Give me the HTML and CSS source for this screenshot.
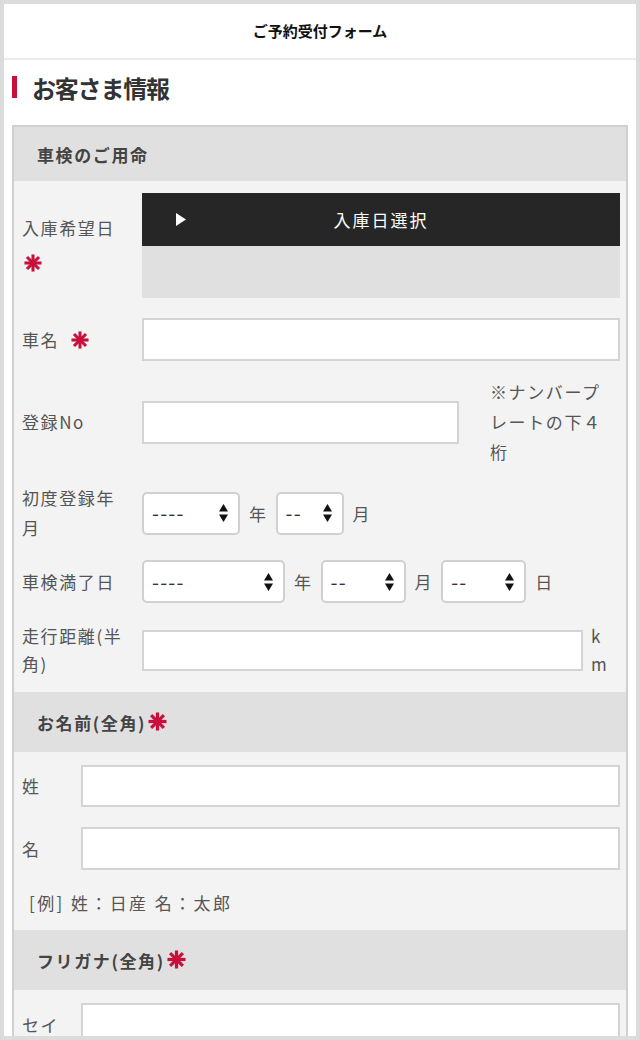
FILE: index.html
```html
<!DOCTYPE html>
<html lang="ja">
<head>
<meta charset="utf-8">
<title>ご予約受付フォーム</title>
<link rel="stylesheet" href="styles.css">
</head>
<body>
<div class="frame">
  <header class="topbar"><h1>ご予約受付フォーム</h1></header>
  <h2 class="page-title">お客さま情報</h2>

  <div class="form-box">
    <div class="group-head">車検のご用命</div>
    <div class="group-body">
      <div class="row row-date">
        <div class="label label-top">
          <div>入庫希望日</div>
          <svg class="req req-below" viewBox="0 0 20 20"><g stroke="currentColor" stroke-width="3.4"><line x1="10" y1="0.5" x2="10" y2="19.5"/><line x1="0.5" y1="10" x2="19.5" y2="10"/><line x1="3.3" y1="3.3" x2="16.7" y2="16.7"/><line x1="16.7" y1="3.3" x2="3.3" y2="16.7"/></g></svg>
        </div>
        <div class="date-picker">
          <div class="date-btn">
            <svg class="play" viewBox="0 0 10 13"><polygon points="0,0 10,6.5 0,13" fill="#fff"/></svg>
            <span class="date-btn-text">入庫日選択</span>
            <span></span>
          </div>
          <div class="date-area"></div>
        </div>
      </div>

      <div class="row row-car">
        <div class="label">車名<svg class="req req-inline" viewBox="0 0 20 20"><g stroke="currentColor" stroke-width="3.4"><line x1="10" y1="0.5" x2="10" y2="19.5"/><line x1="0.5" y1="10" x2="19.5" y2="10"/><line x1="3.3" y1="3.3" x2="16.7" y2="16.7"/><line x1="16.7" y1="3.3" x2="3.3" y2="16.7"/></g></svg></div>
        <input class="text-input" type="text">
      </div>

      <div class="row row-reg">
        <div class="label">登録No</div>
        <input class="text-input" type="text">
        <div class="note">※ナンバープレートの下４桁</div>
      </div>

      <div class="row row-first">
        <div class="label">初度登録年月</div>
        <div class="select w98"><span class="sel-text">----</span><svg class="arrows" viewBox="0 0 9 18"><polygon points="4.5,0 9,7.5 0,7.5"/><polygon points="0,10.5 9,10.5 4.5,18"/></svg></div>
        <span class="unit-char">年</span>
        <div class="select w68"><span class="sel-text">--</span><svg class="arrows" viewBox="0 0 9 18"><polygon points="4.5,0 9,7.5 0,7.5"/><polygon points="0,10.5 9,10.5 4.5,18"/></svg></div>
        <span class="unit-char">月</span>
      </div>

      <div class="row row-expire">
        <div class="label">車検満了日</div>
        <div class="select w143"><span class="sel-text">----</span><svg class="arrows" viewBox="0 0 9 18"><polygon points="4.5,0 9,7.5 0,7.5"/><polygon points="0,10.5 9,10.5 4.5,18"/></svg></div>
        <span class="unit-char">年</span>
        <div class="select w85"><span class="sel-text">--</span><svg class="arrows" viewBox="0 0 9 18"><polygon points="4.5,0 9,7.5 0,7.5"/><polygon points="0,10.5 9,10.5 4.5,18"/></svg></div>
        <span class="unit-char">月</span>
        <div class="select w85"><span class="sel-text">--</span><svg class="arrows" viewBox="0 0 9 18"><polygon points="4.5,0 9,7.5 0,7.5"/><polygon points="0,10.5 9,10.5 4.5,18"/></svg></div>
        <span class="unit-char">日</span>
      </div>

      <div class="row row-km">
        <div class="label label-tight">走行距離(半角)</div>
        <input class="text-input short" type="text">
        <div class="unit-km">km</div>
      </div>
    </div>

    <div class="group-head tall">お名前(全角)<svg class="req req-head" viewBox="0 0 20 20"><g stroke="currentColor" stroke-width="3.4"><line x1="10" y1="0.5" x2="10" y2="19.5"/><line x1="0.5" y1="10" x2="19.5" y2="10"/><line x1="3.3" y1="3.3" x2="16.7" y2="16.7"/><line x1="16.7" y1="3.3" x2="3.3" y2="16.7"/></g></svg></div>
    <div class="group-body">
      <div class="row row-name first">
        <div class="label name-label">姓</div>
        <input class="text-input h42" type="text">
      </div>
      <div class="row row-name">
        <div class="label name-label">名</div>
        <input class="text-input" type="text">
      </div>
      <p class="example">[例] 姓：日産 名：太郎</p>
    </div>

    <div class="group-head tall">フリガナ(全角)<svg class="req req-head" viewBox="0 0 20 20"><g stroke="currentColor" stroke-width="3.4"><line x1="10" y1="0.5" x2="10" y2="19.5"/><line x1="0.5" y1="10" x2="19.5" y2="10"/><line x1="3.3" y1="3.3" x2="16.7" y2="16.7"/><line x1="16.7" y1="3.3" x2="3.3" y2="16.7"/></g></svg></div>
    <div class="group-body">
      <div class="row row-name first">
        <div class="label name-label">セイ</div>
        <input class="text-input" type="text">
      </div>
    </div>
  </div>
</div>
</body>
</html>
```

FILE: styles.css
```css
html, body {
  margin: 0;
  height: 1040px;
  overflow: hidden;
}
body {
  background: #dcdcdc;
  font-family: "Noto Sans CJK JP", "Noto Sans", sans-serif;
}
.frame {
  width: 632px;
  height: 1032px;
  margin: 4px 4px 0 4px;
  background: #fff;
  overflow: hidden;
}
.topbar {
  height: 54px;
  border-bottom: 2px solid #ececec;
  display: flex;
  align-items: center;
  justify-content: center;
}
.topbar h1 {
  margin: 0;
  font-size: 15px;
  line-height: 20px;
  font-weight: 700;
  color: #111;
}
.page-title {
  margin: 0 0 24px 8px;
  padding-top: 15px;
  display: flex;
  align-items: center;
  font-size: 24px;
  line-height: 26px;
  font-weight: 700;
  color: #333;
  letter-spacing: -1.2px;
}
.page-title::before {
  content: "";
  width: 5px;
  height: 22px;
  background: #c8103a;
  margin-right: 15px;
  margin-top: -2px;
}
.form-box {
  margin: 0 8px;
  border: 2px solid #cfcfcf;
  border-bottom: none;
  background: #f3f3f3;
}
.group-head {
  display: flex;
  align-items: center;
  height: 54px;
  padding-left: 23px;
  background: #e0e0e0;
  font-size: 17px;
  font-weight: 700;
  color: #444;
  letter-spacing: 1.6px;
}
.group-head.tall {
  height: 60px;
}
.group-body {
  padding: 0 6px 14px 8px;
}
.row {
  display: flex;
  align-items: center;
  margin-top: 16px;
}
.label {
  flex: none;
  width: 105px;
  margin-right: 15px;
  font-size: 17px;
  letter-spacing: 1.6px;
  color: #555;
  line-height: 30px;
}
.label-tight {
  line-height: 28px;
}
.name-label {
  width: 59px;
  margin-right: 0;
}
.req {
  color: #c8103a;
  display: block;
}
.req-below {
  width: 18px;
  height: 18px;
  margin: 11px 0 0 2px;
}
.req-inline {
  display: inline-block;
  width: 18px;
  height: 18px;
  margin-left: 12px;
  vertical-align: -2px;
}
.req-head {
  width: 19px;
  height: 19px;
  margin-left: 2px;
  margin-top: -1px;
}

/* date picker row */
.row-date {
  margin-top: 12px;
  align-items: flex-start;
}
.label-top {
  padding-top: 20px;
}
.date-picker {
  flex: 1;
  display: flex;
  flex-direction: column;
}
.date-btn {
  height: 53px;
  background: #262626;
  display: grid;
  grid-template-columns: 1fr auto 1fr;
  align-items: center;
}
.play {
  width: 10px;
  height: 13px;
  margin-left: 34px;
}
.date-btn-text {
  color: #fff;
  font-size: 17px;
  letter-spacing: 2px;
}
.date-area {
  height: 52px;
  background: #e0e0e0;
}

/* inputs */
.text-input {
  flex: 1;
  min-width: 0;
  height: 43px;
  margin: 0;
  padding: 0 8px;
  box-sizing: border-box;
  background: #fff;
  border: 2px solid #d4d4d4;
  border-radius: 0;
  font-family: inherit;
  font-size: 16px;
  outline: none;
}
.text-input.short {
  height: 41px;
}
.text-input.h42 {
  height: 42px;
}
.row-car {
  margin-top: 20px;
}
.note {
  flex: none;
  width: 115px;
  margin: 0 15px 0 31px;
  font-size: 17px;
  letter-spacing: 1.6px;
  line-height: 30px;
  color: #555;
}
.select {
  flex: none;
  display: flex;
  align-items: center;
  justify-content: space-between;
  height: 43px;
  box-sizing: border-box;
  padding: 0 10px 0 8px;
  background: #fff;
  border: 2px solid #d0d0d0;
  border-radius: 5px;
  color: #333;
}
.sel-text {
  font-size: 20px;
  letter-spacing: 1.2px;
  line-height: 20px;
}
.arrows {
  width: 9px;
  height: 18px;
  fill: #111;
}
.w98 { width: 98px; }
.w68 { width: 68px; }
.w143 { width: 143px; }
.w85 { width: 85px; }
.unit-char {
  margin: 0 8px 0 9px;
  font-size: 17px;
  letter-spacing: 1.6px;
  color: #555;
}
.row-expire {
  margin-top: 17px;
}
.row-km {
  margin-top: 19px;
}
.unit-km {
  flex: none;
  width: 18px;
  margin: 0 11px 0 8px;
  font-size: 17px;
  letter-spacing: 1.6px;
  line-height: 28px;
  color: #555;
  word-break: break-all;
}

/* name rows */
.row-name {
  margin-top: 20px;
}
.row-name.first {
  margin-top: 13px;
}
.example {
  margin: 20px 0 0 0;
  padding-left: 7px;
  font-size: 17px;
  letter-spacing: 2.4px;
  line-height: 26px;
  color: #555;
}
```
